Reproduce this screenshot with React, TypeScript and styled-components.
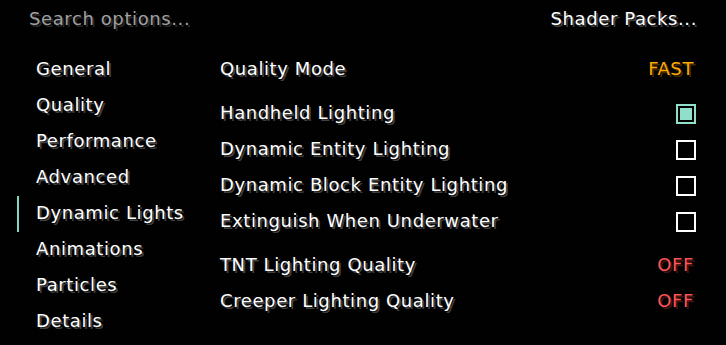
import { FC } from "react";
import styled, { createGlobalStyle } from "styled-components";

const GlobalStyle = createGlobalStyle`
  html, body {
    margin: 0;
    padding: 0;
    background: #000000;
  }
  body {
    font-family: "DejaVu Sans", "Liberation Sans", sans-serif;
    font-size: 18px;
    letter-spacing: 0.6px;
    color: #ffffff;
  }
`;

const Screen = styled.div`
  width: 726px;
  height: 345px;
  background: #010102;
  display: flex;
  flex-direction: column;
  overflow: hidden;
`;

const TopBar = styled.div`
  height: 38px;
  display: flex;
  align-items: center;
  justify-content: space-between;
  padding: 0 29px 0 29px;
  margin-bottom: 13px;
`;

const Label = styled.span<{ $tone?: "white" | "gray" | "orange" | "red" }>`
  line-height: 1;
  white-space: nowrap;
  color: ${(p) =>
    p.$tone === "gray"
      ? "#a0a0a0"
      : p.$tone === "orange"
      ? "#ffaa00"
      : p.$tone === "red"
      ? "#ff5555"
      : "#ffffff"};
  text-shadow: 2px 2px 0
    ${(p) =>
      p.$tone === "gray"
        ? "#282828"
        : p.$tone === "orange"
        ? "#3f2a00"
        : p.$tone === "red"
        ? "#3f1515"
        : "#3f3f3f"};
`;

const Body = styled.div`
  flex: 1;
  display: flex;
`;

const Sidebar = styled.nav`
  width: 220px;
  display: flex;
  flex-direction: column;
`;

const Tab = styled.div<{ $active?: boolean }>`
  position: relative;
  height: 36px;
  display: flex;
  align-items: center;
  padding-left: 36px;
  &::before {
    content: "";
    display: ${(p) => (p.$active ? "block" : "none")};
    position: absolute;
    left: 17px;
    top: 1px;
    width: 2px;
    height: 36px;
    background: #7fd8c4;
  }
`;

const Options = styled.div`
  flex: 1;
  display: flex;
  flex-direction: column;
  gap: 8px;
  padding-right: 30px;
`;

const Group = styled.div`
  display: flex;
  flex-direction: column;
`;

const Row = styled.div`
  height: 36px;
  display: flex;
  align-items: center;
  justify-content: space-between;
`;

const Value = styled(Label)`
  margin-right: 2px;
`;

const Checkbox = styled.div<{ $checked?: boolean }>`
  width: 20px;
  height: 20px;
  box-sizing: border-box;
  border: 2px solid ${(p) => (p.$checked ? "#8fdfcb" : "#ffffff")};
  padding: 2px;
  margin-top: 2px;
  &::after {
    content: "";
    display: ${(p) => (p.$checked ? "block" : "none")};
    width: 12px;
    height: 12px;
    background: #8fdfcb;
  }
`;

const tabs = [
  "General",
  "Quality",
  "Performance",
  "Advanced",
  "Dynamic Lights",
  "Animations",
  "Particles",
  "Details",
];

type Option =
  | { name: string; kind: "cycle"; value: string; tone: "orange" | "red" }
  | { name: string; kind: "check"; checked: boolean };

const groups: Option[][] = [
  [{ name: "Quality Mode", kind: "cycle", value: "FAST", tone: "orange" }],
  [
    { name: "Handheld Lighting", kind: "check", checked: true },
    { name: "Dynamic Entity Lighting", kind: "check", checked: false },
    { name: "Dynamic Block Entity Lighting", kind: "check", checked: false },
    { name: "Extinguish When Underwater", kind: "check", checked: false },
  ],
  [
    { name: "TNT Lighting Quality", kind: "cycle", value: "OFF", tone: "red" },
    { name: "Creeper Lighting Quality", kind: "cycle", value: "OFF", tone: "red" },
  ],
];

const App: FC = () => {
  return (
    <>
      <GlobalStyle />
      <Screen>
        <TopBar>
          <Label $tone="gray">Search options...</Label>
          <Label>Shader Packs...</Label>
        </TopBar>
        <Body>
          <Sidebar>
            {tabs.map((t) => (
              <Tab key={t} $active={t === "Dynamic Lights"}>
                <Label>{t}</Label>
              </Tab>
            ))}
          </Sidebar>
          <Options>
            {groups.map((g, i) => (
              <Group key={i}>
                {g.map((o) => (
                  <Row key={o.name}>
                    <Label>{o.name}</Label>
                    {o.kind === "cycle" ? (
                      <Value $tone={o.tone}>{o.value}</Value>
                    ) : (
                      <Checkbox $checked={o.checked} />
                    )}
                  </Row>
                ))}
              </Group>
            ))}
          </Options>
        </Body>
      </Screen>
    </>
  );
};

export default App;
